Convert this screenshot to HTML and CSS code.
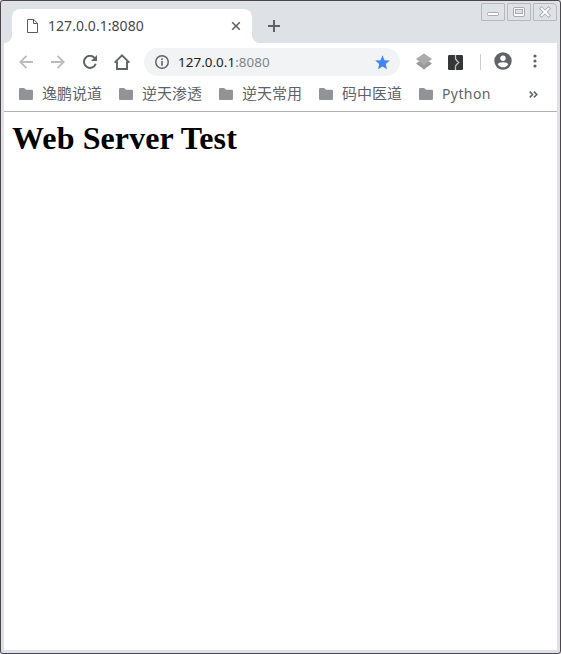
FILE: index.html
```html
<!DOCTYPE html>
<html lang="en">
<head>
<meta charset="utf-8">
<title>127.0.0.1:8080</title>
<link rel="stylesheet" href="styles.css">
</head>
<body>
<svg class="defs" aria-hidden="true">
  <symbol id="folder" viewBox="0 0 14 12"><path d="M1.3 0H5.2L7 1.8H12.7Q14 1.8 14 3.1V10.7Q14 12 12.7 12H1.3Q0 12 0 10.7V1.3Q0 0 1.3 0Z" fill="#919397"/></symbol>
</svg>
<div class="window">
  <header class="tabstrip">
    <div class="tab">
      <svg class="page-icon" width="11" height="14" viewBox="0 0 11 14" fill="none" stroke="#5b5b5b"><path d="M.5 .5H6.8L10.5 4.2V13.5H.5ZM6.5 .5V4.5H10.5"/></svg>
      <span class="tab-title">127.0.0.1:8080</span>
      <svg class="tab-close" width="10" height="10" viewBox="0 0 10 10" stroke="#5f6368" stroke-width="1.6"><path d="M1.2 1.2L8.8 8.8M8.8 1.2L1.2 8.8"/></svg>
    </div>
    <svg class="new-tab" width="12" height="12" viewBox="0 0 12 12" stroke="#5f6368" stroke-width="2"><path d="M6 0V12M0 6H12"/></svg>
    <div class="controls">
      <span class="control"><svg width="22" height="16" viewBox="0 0 22 16"><rect x="5.5" y="8.500" width="11" height="3" rx="1" fill="#fff" stroke="#aaa8b0"/></svg></span>
      <span class="control"><svg width="22" height="16" viewBox="0 0 22 16"><rect x="5.500" y="3.500" width="11" height="9" rx="1.500" fill="#fff" stroke="#aaa8b0"/><rect x="7.500" y="5.500" width="7" height="4" fill="#dee1e6" stroke="#aaa8b0"/></svg></span>
      <span class="control last"><svg width="22" height="16" viewBox="0 0 22 16" fill="none" stroke-linecap="square"><path d="M7.500 4.500L14.500 11.500M14.500 4.500L7.500 11.500" stroke="#aaa8b0" stroke-width="3.600"/><path d="M7.500 4.500L14.500 11.500M14.500 4.500L7.500 11.500" stroke="#fff" stroke-width="1.800"/></svg></span>
    </div>
  </header>
  <div class="toolbar">
    <svg class="back" width="14" height="14" viewBox="0 0 14 14" fill="none" stroke="#babcbe" stroke-width="1.900"><path d="M14 7H1.500M7.500 .8L1.300 7L7.500 13.200"/></svg>
    <svg class="forward" width="14" height="14" viewBox="0 0 14 14" fill="none" stroke="#babcbe" stroke-width="1.900"><path d="M0 7H12.500M6.500 .8L12.700 7L6.500 13.200"/></svg>
    <svg class="reload" width="14" height="14" viewBox="0 0 14 14"><path d="M12.700 8.700A6 6 0 1 1 11.500 2.900" fill="none" stroke="#5f6368" stroke-width="2"/><path d="M14 0V6H8Z" fill="#5f6368"/></svg>
    <svg class="home" width="16" height="16" viewBox="0 0 16 16" fill="none" stroke="#5f6368" stroke-width="1.900"><path d="M.7 8.700L8 1.400L15.300 8.700M3 7.500V15H13V7.500"/></svg>
    <div class="omnibox">
      <svg width="14" height="14" viewBox="0 0 14 14"><circle cx="7" cy="7" r="6.250" fill="none" stroke="#5f6368" stroke-width="1.500"/><path d="M6.200 3.300H7.800V4.900H6.200ZM6.200 6.100H7.800V10.700H6.200Z" fill="#5f6368"/></svg>
      <span class="url">127.0.0.1<span class="port">:8080</span></span>
      <svg class="star" width="15" height="15" viewBox="0 0 15 15"><path d="M7.500 .3L9.500 5.200L14.800 5.600L10.800 9L12 14.300L7.500 11.500L3 14.300L4.200 9L.2 5.600L5.500 5.200Z" fill="#4285f4"/></svg>
    </div>
    <svg class="layers" width="16" height="17" viewBox="0 0 16 17"><path d="M0 10.500L3 8.500H13L16 10.500L8 16.500Z" fill="#999"/><path d="M0 6L8 .5L16 6L8 12Z" fill="#aaa"/></svg>
    <svg class="extension" width="15" height="15" viewBox="0 0 15 15"><rect width="15" height="15" rx="1.300" fill="#353638"/><path d="M7.500 0V3.500M7 4Q8.500 4.200 9 6L10.700 7.500L9 9Q8.500 10.500 7 11M7.500 11.500V15" fill="none" stroke="#c5c5c5" stroke-width="1.300"/></svg>
    <span class="divider"></span>
    <svg class="avatar" width="18" height="18" viewBox="0 0 18 18"><circle cx="9" cy="9" r="8.700" fill="#5f6368"/><circle cx="9" cy="6.200" r="2.700" fill="#fff"/><path d="M3.700 12.200Q4.500 10.200 9 10.200T14.300 12.200Q12.500 15.300 9 15.300T3.700 12.200Z" fill="#fff"/></svg>
    <svg class="more" width="4" height="14" viewBox="0 0 4 14" fill="#5f6368"><circle cx="2" cy="2" r="1.600"/><circle cx="2" cy="7" r="1.600"/><circle cx="2" cy="12" r="1.600"/></svg>
  </div>
  <nav class="bookmarks">
    <div class="bookmark"><svg width="14" height="12"><use href="#folder"/></svg><span>逸鹏说道</span></div>
    <div class="bookmark"><svg width="14" height="12"><use href="#folder"/></svg><span>逆天渗透</span></div>
    <div class="bookmark"><svg width="14" height="12"><use href="#folder"/></svg><span>逆天常用</span></div>
    <div class="bookmark"><svg width="14" height="12"><use href="#folder"/></svg><span>码中医道</span></div>
    <div class="bookmark"><svg width="14" height="12"><use href="#folder"/></svg><span class="latin">Python</span></div>
    <svg class="overflow" width="9" height="7" viewBox="0 0 9 7" fill="none" stroke="#5f6368" stroke-width="1.500"><path d="M.7 .6L3.600 3.500L.7 6.400M4.900 .6L7.800 3.500L4.900 6.400"/></svg>
  </nav>
  <main class="page"><h1>Web Server Test</h1></main>
</div>
</body>
</html>
```
FILE: styles.css
```css
* { box-sizing: border-box; }
html { background: #d9d6da; }
body { margin: 0; font-family: "Noto Sans", "Noto Sans CJK SC", sans-serif; }
svg { display: block; flex: none; }
.defs { display: none; }
.window {
  display: flex;
  flex-direction: column;
  width: 561px;
  height: 654px;
  padding: 0 3px 3px;
  border: 1px solid #4a464b;
  border-radius: 3px;
  background: #dee1e6;
}
.tabstrip { display: flex; height: 42px; flex: none; padding-top: 8px; }
.tab {
  position: relative;
  display: flex;
  align-items: center;
  width: 240px;
  height: 34px;
  margin-left: 8px;
  padding: 0 11px 0 15px;
  border-radius: 8px 8px 0 0;
  background: #fff;
}
.tab::before, .tab::after {
  content: "";
  position: absolute;
  bottom: 0;
  width: 8px;
  height: 8px;
}
.tab::before { left: -8px; background: radial-gradient(circle at 0 0, transparent 7.5px, #fff 8.5px); }
.tab::after { right: -8px; background: radial-gradient(circle at 100% 0, transparent 7.5px, #fff 8.5px); }
.tab-title { margin-left: 10px; font-size: 14px; line-height: 20px; letter-spacing: .05px; color: #45484c; white-space: nowrap; }
.tab-close { margin-left: auto; }
.new-tab { margin: 11px 0 0 16px; }
.controls { display: flex; gap: 2px; margin: -6px 0 0 auto; }
.control { width: 24px; height: 18px; border: 1px solid #b9b6be; border-radius: 1px; }
.last { border-top-right-radius: 4px; }
.toolbar { display: flex; align-items: center; height: 37px; flex: none; padding-left: 15px; background: #fff; }
.forward { margin-left: 18px; }
.reload { margin-left: 18px; }
.home { margin-left: 17px; }
.omnibox {
  display: flex;
  align-items: center;
  width: 256px;
  height: 28px;
  margin: 1px 0 0 14px;
  padding: 0 10px 0 11px;
  border-radius: 14px;
  background: #f1f3f4;
}
.url { margin-left: 9px; font-size: 13.400px; line-height: 20px; letter-spacing: .05px; color: #202124; white-space: nowrap; }
.port { color: #80868b; }
.star { margin-left: auto; }
.layers { margin-left: 16px; }
.extension { margin: 2px 0 0 16px; }
.divider { width: 1px; height: 16px; margin-left: 17px; background: #cbcdd0; }
.avatar { margin: -1px 0 0 13px; }
.more { margin: -1px 0 0 21px; }
.bookmarks { display: flex; align-items: center; height: 32px; flex: none; padding: 0 19px 3px 15px; border-bottom: 1px solid #b1b2b4; background: #fff; }
.bookmark { display: flex; align-items: center; width: 100px; font-size: 15px; line-height: 22px; color: #5f6368; white-space: nowrap; }
.bookmark span { margin: -2px 0 0 9px; font-family: "Noto Sans CJK SC", sans-serif; }
.bookmark .latin { margin-top: 0; font-family: "Noto Sans", sans-serif; font-size: 14px; letter-spacing: .4px; }
.overflow { margin-left: auto; }
.page { flex: 1; padding: 8px; background: #fff; }
.page h1 { margin: 0; font: bold 32px/37px "Liberation Serif", serif; letter-spacing: .1px; color: #000; }
```
